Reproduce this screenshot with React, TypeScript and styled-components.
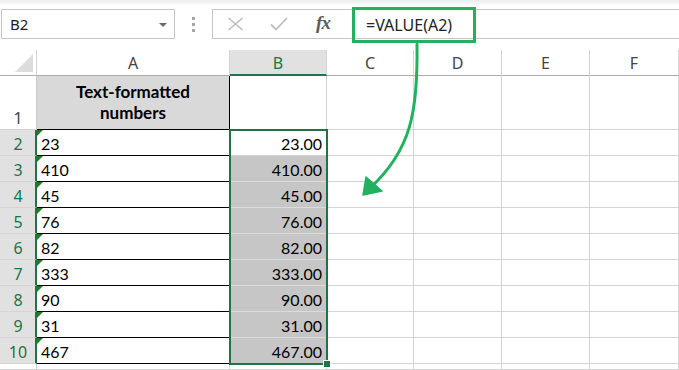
import React from "react";
import styled, {createGlobalStyle, css} from "styled-components";

const GREEN = "#217346";
const NOTE = "#22b15f";
const GRID = "#d4d4d4";

const GlobalStyle = createGlobalStyle`
  html, body {
    margin: 0;
    padding: 0;
    background: #fff;
    overflow: hidden;
  }
`;

const Page = styled.div`
  position: relative;
  width: 679px;
  height: 370px;
  overflow: hidden;
  background: #fff;
`;

const Toolbar = styled.div`
  display: flex;
  align-items: flex-start;
  height: 50px;
  box-sizing: border-box;
  padding-top: 9px;
  background: linear-gradient(#ececec 0, #fff 6px);
  font-family: "Noto Sans", "Open Sans", sans-serif;
`;

const NameBox = styled.div`
  margin-left: 1px;
  width: 174px;
  height: 30px;
  box-sizing: border-box;
  border: 1px solid #c6c6c6;
  background: #fff;
  display: flex;
  align-items: center;
  justify-content: space-between;
  padding: 0 7px 0 8px;
  font-size: 15px;
  color: #222;
`;

const Caret = styled.span`
  width: 0;
  height: 0;
  border-left: 4px solid transparent;
  border-right: 4px solid transparent;
  border-top: 4px solid #6a6a6a;
  margin-top: 2px;
`;

const Grip = styled.div`
  width: 37px;
  display: flex;
  flex-direction: column;
  align-items: center;
  gap: 3px;
  padding-top: 8px;
`;

const GripDot = styled.span`
  width: 3px;
  height: 3px;
  background: #a6a6a6;
`;

const FormulaBar = styled.div`
  flex: 1;
  height: 30px;
  box-sizing: border-box;
  border: 1px solid #c6c6c6;
  border-right: none;
  background: #fff;
  display: flex;
  align-items: flex-start;
`;

const IconArea = styled.div`
  width: 139px;
  height: 28px;
  display: flex;
  align-items: center;
`;

const IconButton = styled.span`
  width: 44px;
  display: flex;
  justify-content: center;
  align-items: center;
`;

const Fx = styled.span`
  font-family: "Liberation Serif", "DejaVu Serif", serif;
  font-style: italic;
  font-weight: bold;
  font-size: 19px;
  color: #5a5a5a;
  letter-spacing: -1px;
  margin-top: -2px;
`;

const Highlight = styled.div`
  margin-top: -3px;
  width: 124px;
  height: 36px;
  box-sizing: border-box;
  border: 3px solid ${NOTE};
  display: flex;
  align-items: center;
  padding-left: 11px;
  font-size: 16px;
  color: #222;
  position: relative;
  z-index: 1;
`;

const Sheet = styled.div`
  position: relative;
  display: grid;
  grid-template-columns: 37px 193px 97px 87px 88px 88px 89px;
  grid-template-rows: 26px 54px repeat(9, 26px) 1fr;
  height: 320px;
`;

const HeadBase = css`
  box-sizing: border-box;
  font-family: "Noto Sans", "Open Sans", sans-serif;
  font-size: 15px;
  color: #444;
  display: flex;
`;

const Corner = styled.div`
  ${HeadBase};
  position: relative;
  border-right: 1px solid ${GRID};
  border-bottom: 1px solid #ababab;

  &::after {
    content: "";
    position: absolute;
    right: 3px;
    bottom: 3px;
    width: 0;
    height: 0;
    border-left: 18px solid transparent;
    border-bottom: 18px solid #dcdcdc;
  }
`;

const ColHead = styled.div<{ $active?: boolean }>`
  ${HeadBase};
  font-size: 16px;
  justify-content: center;
  align-items: center;
  border-right: 1px solid ${GRID};
  border-bottom: 1px solid #ababab;
  ${p => p.$active && css`
    background: #e1e1e1;
    color: ${GREEN};
    border-bottom: 2px solid ${GREEN};
    padding-top: 1px;
  `}
`;

const RowHead = styled.div<{ $active?: boolean }>`
  ${HeadBase};
  font-size: 16px;
  justify-content: center;
  align-items: flex-end;
  padding-bottom: 0;
  border-right: 1px solid #c8c8c8;
  border-bottom: 1px solid ${GRID};
  ${p => p.$active && css`
    background: #e1e1e1;
    color: ${GREEN};
    border-right: 2px solid ${GREEN};
    padding-left: 1px;
  `}
`;

const CellBase = css`
  box-sizing: border-box;
  font-family: Lato, "Liberation Sans", sans-serif;
  font-size: 16px;
  color: #000;
  display: flex;
  align-items: flex-end;
  padding-bottom: 2px;
`;

const HeaderCell = styled.div`
  ${CellBase};
  background: #d9d9d9;
  font-weight: bold;
  font-size: 17px;
  justify-content: center;
  text-align: center;
  line-height: 21px;
  padding-bottom: 6px;
  border-right: 1px solid #000;
  border-bottom: 1px solid #000;
`;

const TextCell = styled.div`
  ${CellBase};
  position: relative;
  padding-left: 4px;
  border-right: 1px solid #000;
  border-bottom: 1px solid #000;

  &::before {
    content: "";
    position: absolute;
    left: 0;
    top: 0;
    width: 0;
    height: 0;
    border-top: 6px solid #1e7d1e;
    border-right: 6px solid transparent;
  }
`;

const ValueCell = styled.div<{ $shaded?: boolean }>`
  ${CellBase};
  justify-content: flex-end;
  padding-right: 4px;
  border-right: 1px solid ${GRID};
  border-bottom: 1px solid ${p => (p.$shaded ? "#dcdcdc" : GRID)};
  background: ${p => (p.$shaded ? "#c6c6c6" : "#fff")};
`;

const Cell = styled.div`
  box-sizing: border-box;
  border-right: 1px solid ${GRID};
  border-bottom: 1px solid ${GRID};
`;

/* selection rectangle drawn over B2:B10 */
const Selection = styled.div`
  position: absolute;
  left: 229px;
  top: 79px;
  width: 99px;
  height: 236px;
  box-sizing: border-box;
  border: 2px solid ${GREEN};
  pointer-events: none;
`;

const FillHandle = styled.span`
  position: absolute;
  right: -5px;
  bottom: -5px;
  width: 6px;
  height: 6px;
  background: ${GREEN};
  border: 1px solid #fff;
`;

const Annotation = styled.svg`
  position: absolute;
  left: 0;
  top: 0;
  pointer-events: none;
  z-index: 2;
`;

const columns = ["A", "B", "C", "D", "E", "F"];
const values = ["23", "410", "45", "76", "82", "333", "90", "31", "467"];

export default function App() {
    return (
        <Page>
            <GlobalStyle/>
            <Toolbar>
                <NameBox>
                    <span>B2</span>
                    <Caret/>
                </NameBox>
                <Grip>
                    <GripDot/>
                    <GripDot/>
                    <GripDot/>
                </Grip>
                <FormulaBar>
                    <IconArea>
                        <IconButton>
                            <svg width="17" height="14" viewBox="0 0 17 14">
                                <path d="M1.5 1 L15.5 13 M15.5 1 L1.5 13" stroke="#bdbdbd" strokeWidth="1.6" fill="none"/>
                            </svg>
                        </IconButton>
                        <IconButton>
                            <svg width="18" height="14" viewBox="0 0 18 14">
                                <path d="M1 7.5 L6 12.5 L17 1" stroke="#bdbdbd" strokeWidth="1.8" fill="none"/>
                            </svg>
                        </IconButton>
                        <IconButton>
                            <Fx>fx</Fx>
                        </IconButton>
                    </IconArea>
                    <Highlight>=VALUE(A2)</Highlight>
                </FormulaBar>
            </Toolbar>

            <Sheet>
                <Corner/>
                {columns.map(c => (
                    <ColHead key={c} $active={c === "B"}>{c}</ColHead>
                ))}

                <RowHead>1</RowHead>
                <HeaderCell>Text-formatted<br/>numbers</HeaderCell>
                <Cell/>
                <Cell/><Cell/><Cell/><Cell/>

                {values.map((v, i) => (
                    <React.Fragment key={i}>
                        <RowHead $active>{i + 2}</RowHead>
                        <TextCell>{v}</TextCell>
                        <ValueCell $shaded={i > 0}>{Number(v).toFixed(2)}</ValueCell>
                        <Cell/><Cell/><Cell/><Cell/>
                    </React.Fragment>
                ))}

                <RowHead/>
                <Cell/><Cell/><Cell/><Cell/><Cell/><Cell/>

                <Selection>
                    <FillHandle/>
                </Selection>
            </Sheet>

            <Annotation width="679" height="370" viewBox="0 0 679 370">
                <path d="M417 44 C 418 110, 412 150, 369 189" stroke={NOTE} strokeWidth="3"
                      fill="none" strokeLinecap="round"/>
                <polygon points="363,195 366,177 382,191" fill={NOTE} stroke={NOTE}
                         strokeWidth="1.5" strokeLinejoin="round"/>
            </Annotation>
        </Page>
    );
}
